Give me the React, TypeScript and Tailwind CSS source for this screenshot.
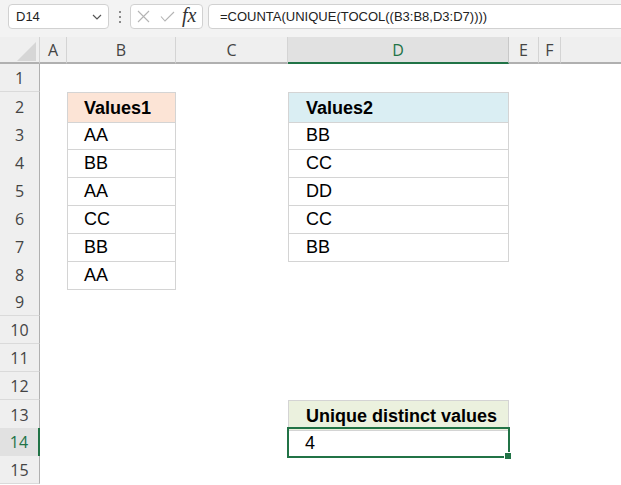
import React from 'react';

type Row = {
  n: number;
  b?: string;
  bHead?: boolean;
  d?: string;
  dFill?: string;
  dTop?: boolean;
  selected?: boolean;
};

const rows: Row[] = [
  { n: 1 },
  { n: 2, b: 'Values1', bHead: true, d: 'Values2', dFill: 'bg-[#daeef3]', dTop: true },
  { n: 3, b: 'AA', d: 'BB' },
  { n: 4, b: 'BB', d: 'CC' },
  { n: 5, b: 'AA', d: 'DD' },
  { n: 6, b: 'CC', d: 'CC' },
  { n: 7, b: 'BB', d: 'BB' },
  { n: 8, b: 'AA' },
  { n: 9 },
  { n: 10 },
  { n: 11 },
  { n: 12 },
  { n: 13, d: 'Unique distinct values', dFill: 'bg-[#ebf1de]', dTop: true },
  { n: 14, d: '4', selected: true },
  { n: 15 },
];

const columns = [
  { label: 'A', active: false },
  { label: 'B', active: false },
  { label: 'C', active: false },
  { label: 'D', active: true },
  { label: 'E', active: false },
  { label: 'F', active: false },
];

const gridCols = 'grid grid-cols-[40px_27px_109px_112px_221px_30px_22px_1fr]';

export default function App() {
  return (
    <div className="w-[621px] h-[485px] overflow-hidden bg-white font-['Liberation_Sans',Arial,sans-serif] text-black">
      {/* Formula bar */}
      <div className="h-[37px] bg-[#f3f3f3] flex items-start pt-[4px] pl-[8px]">
        <div className="w-[101px] h-[25px] bg-white border border-[#d1d1d1] rounded-[4px] flex items-center justify-between pl-[7px] pr-[6px]">
          <span className="text-[13px] text-[#222]">D14</span>
          <svg width="10" height="6" viewBox="0 0 10 6" className="mt-[1px]">
            <path d="M1 1l4 4 4-4" fill="none" stroke="#555" strokeWidth="1.2" />
          </svg>
        </div>
        <div className="w-[21px] h-[25px] flex flex-col items-center justify-center gap-[3px]">
          <span className="w-[2px] h-[2px] bg-[#8a8a8a]"></span>
          <span className="w-[2px] h-[2px] bg-[#8a8a8a]"></span>
          <span className="w-[2px] h-[2px] bg-[#8a8a8a]"></span>
        </div>
        <div className="w-[73px] h-[25px] bg-white border border-[#d1d1d1] rounded-[4px] flex items-center pl-[6px]">
          <svg width="13" height="13" viewBox="0 0 13 13">
            <path d="M1 1l11 11M12 1L1 12" stroke="#b4b4b4" strokeWidth="1.1" fill="none" />
          </svg>
          <svg width="15" height="11" viewBox="0 0 15 11" className="ml-[10px]">
            <path d="M1 5.5l4 4.5L14 1" stroke="#b4b4b4" strokeWidth="1.1" fill="none" />
          </svg>
          <span className="ml-[7px] text-[20px] leading-none italic font-['Liberation_Serif',serif] text-[#333] -mt-[3px]">fx</span>
        </div>
        <div className="flex-1 ml-[5px] -mr-[4px] h-[25px] bg-white border border-[#d1d1d1] rounded-[4px] flex items-center pl-[11px]">
          <span className="text-[13px] text-[#222]">=COUNTA(UNIQUE(TOCOL((B3:B8,D3:D7))))</span>
        </div>
      </div>

      {/* Column headers */}
      <div className={`${gridCols} h-[27px] bg-[#efefef] text-[16px] font-['Open_Sans',sans-serif]`}>
        <div className="relative border-r border-[#d4d4d4] border-b-2 border-b-[#b0b0b0]">
          <svg width="40" height="25" viewBox="0 0 40 25" className="absolute left-0 top-0">
            <path d="M17 24L36 5V24Z" fill="#d6d6d6" />
          </svg>
        </div>
        {columns.map((c) => (
          <div
            key={c.label}
            className={`flex items-center justify-center border-r ${
              c.active
                ? 'bg-[#e1e1e1] text-[#217346] border-r-[#c8c8c8] border-b-2 border-b-[#217346]'
                : 'text-[#444] border-r-[#d4d4d4] border-b-2 border-b-[#b0b0b0]'
            }`}
          >
            {c.label}
          </div>
        ))}
        <div className="border-b-2 border-b-[#b0b0b0]"></div>
      </div>

      {/* Sheet rows */}
      {rows.map((r) => (
        <div key={r.n} className={`${gridCols} h-[28px]`}>
          <div
            className={`flex items-center justify-center text-[16px] font-['Open_Sans',sans-serif] border-b border-b-[#dadada] ${
              r.selected
                ? 'bg-[#e1e1e1] text-[#217346] border-r-2 border-r-[#217346]'
                : 'bg-[#efefef] text-[#444] border-r border-r-[#b0b0b0]'
            }`}
          >
            {r.n}
          </div>
          <div></div>
          {r.b ? (
            <div
              className={`flex items-center pl-[16px] pt-[2px] text-[18px] border-x border-b border-[#d4d4d4] ${
                r.bHead ? 'bg-[#fce4d6] font-bold border-t' : ''
              }`}
            >
              {r.b}
            </div>
          ) : (
            <div></div>
          )}
          <div></div>
          {r.d ? (
            <div
              className={`relative flex items-center pl-[17px] pt-[2px] text-[18px] ${
                r.selected ? '' : 'border-x border-b border-[#d4d4d4]'
              } ${r.dFill ? `${r.dFill} font-bold` : ''} ${r.dTop ? 'border-t' : ''}`}
            >
              {r.d}
              {r.selected && (
                <>
                  <div className="absolute -left-px -top-px right-[-1px] bottom-[-1px] border-2 border-[#217346]"></div>
                  <div className="absolute right-[-3px] bottom-[-3px] w-[6px] h-[6px] bg-[#217346] border border-white box-content"></div>
                </>
              )}
            </div>
          ) : (
            <div></div>
          )}
          <div></div>
          <div></div>
          <div></div>
        </div>
      ))}
    </div>
  );
}
